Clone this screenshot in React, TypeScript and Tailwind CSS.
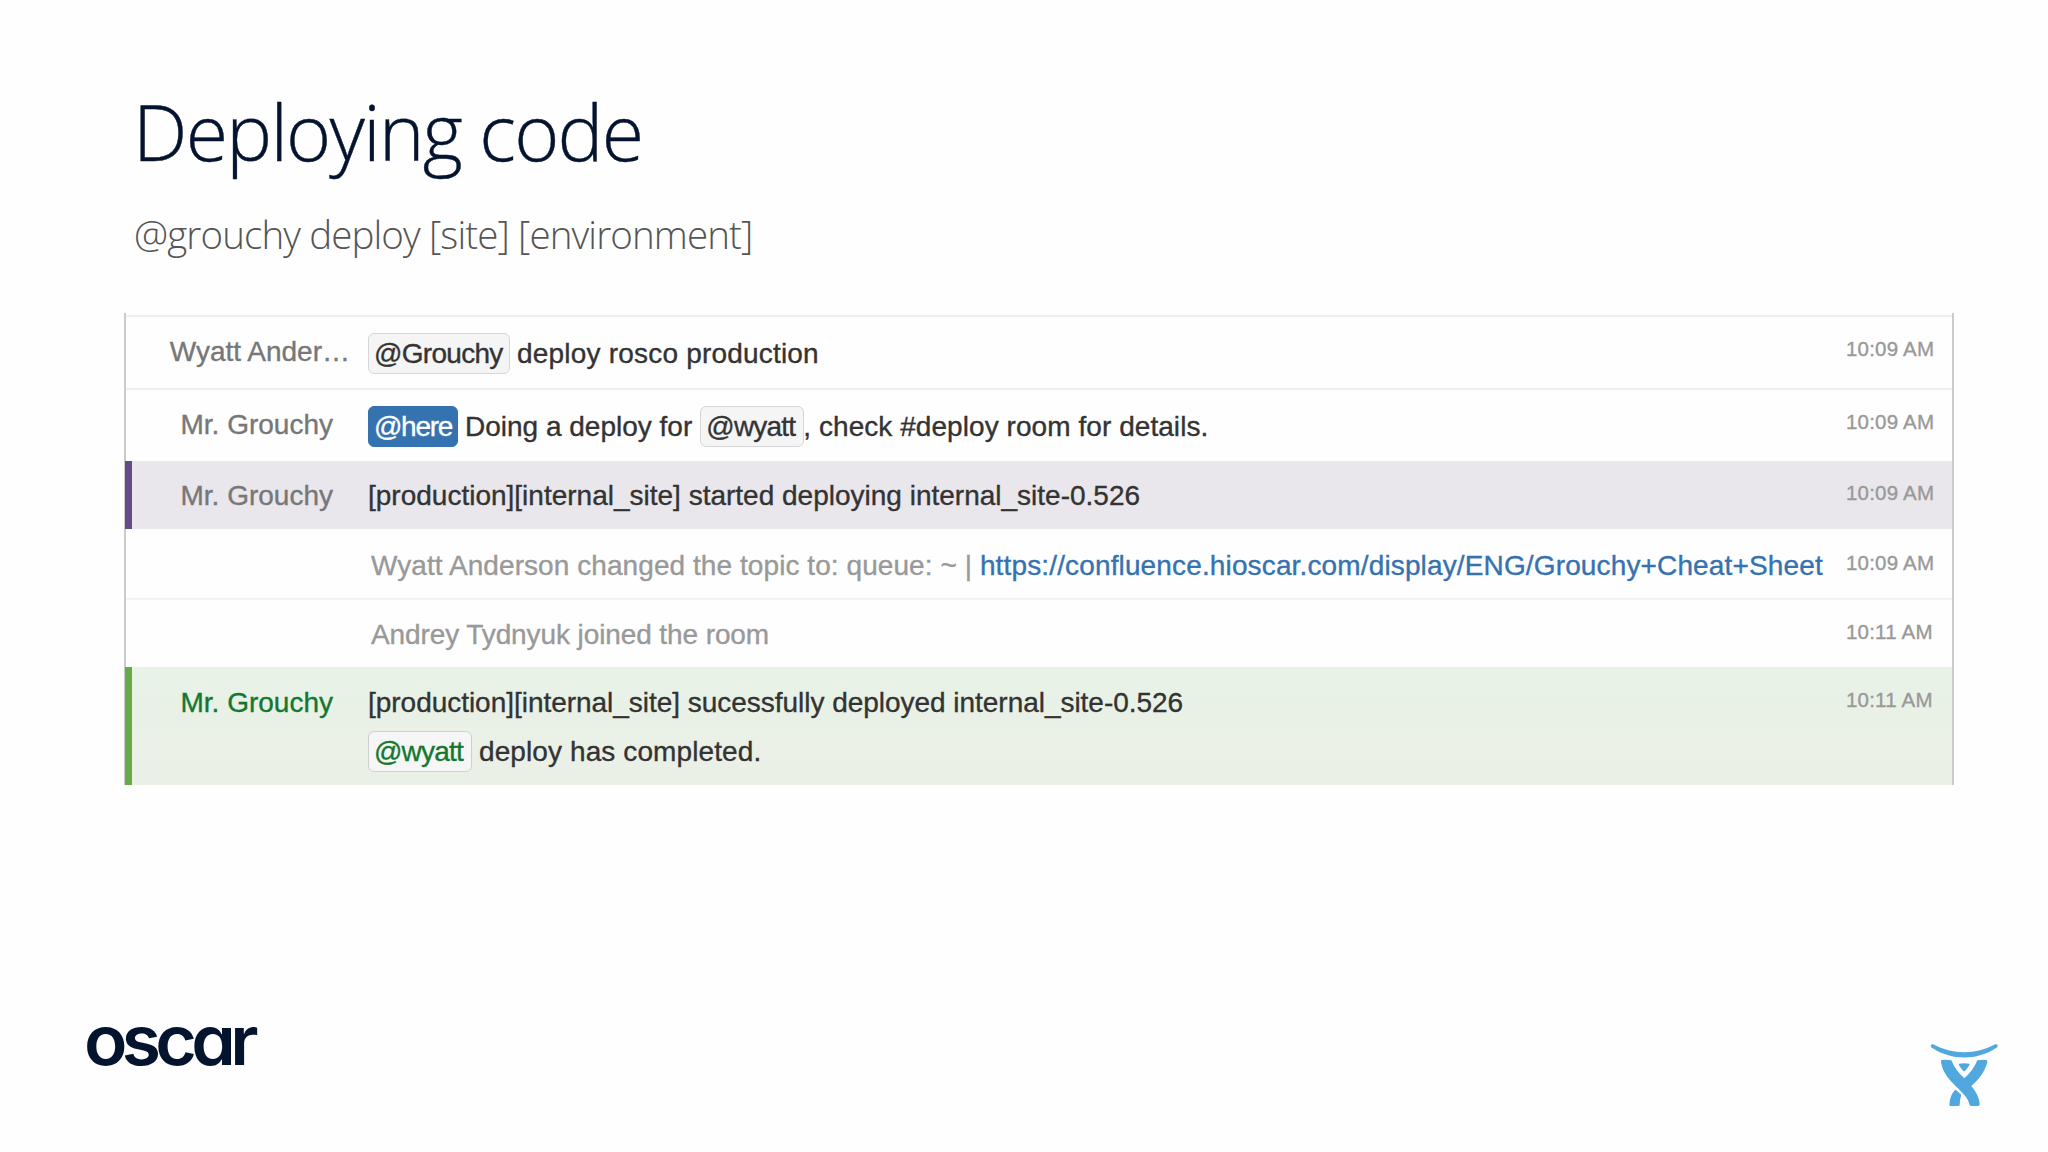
import type { ReactNode } from 'react';
import clsx from 'clsx';

type RowProps = {
  name?: string;
  time: string;
  className: string;
  barClass?: string;
  nameClass?: string;
  bodyClass?: string;
  children: ReactNode;
};

// One line of the chat log: coloured edge, sender, message, time
function Row({
  name,
  time,
  className,
  barClass = '-my-0.5 border-l-2 border-[#cbcbcb]',
  nameClass = 'pr-[17px] text-[#777777]',
  bodyClass = 'pt-[17px]',
  children,
}: RowProps) {
  return (
    <div className={clsx('flex', className)}>
      <div className={clsx('w-2 shrink-0', barClass)} />
      <div className={clsx('w-[218px] shrink-0 pt-[17px] text-right', nameClass)}>{name}</div>
      <div className={clsx('ml-[18px] flex-1', bodyClass)}>{children}</div>
      <div className="w-[106px] pt-5 text-[20.5px] leading-6 tracking-[0.2px] text-[#999999]">{time}</div>
    </div>
  );
}

function Mention({ className, children }: { className: string; children: ReactNode }) {
  return (
    <span className={clsx('h-[41px] shrink-0 rounded-md border pl-[5px] leading-[39px]', className)}>
      {children}
    </span>
  );
}

function AtlassianLogo() {
  return (
    <svg className="mt-9 mr-[43px] h-20 w-20" viewBox="0 0 240 240" fill="#51a8df">
      <path d="M24 28 C84 60 152 60 211 28 Q219 26 218 34 Q217 37 213 39 C156 77 80 77 22 39 Q17 37 17 32 Q18 26 24 28Z" />
      <path d="M50 75 Q64 73 79 76 Q91 106 118 130 Q145 106 157 76 Q172 73 184 75 Q188 76 187 81 C179 112 161 134 139 153 C154 172 163 188 164 208 Q164 213 159 213 L138 213 Q134 213 133 208 C130 189 116 177 94 155 C70 132 53 112 48 81 Q47 76 50 75Z" />
      <path d="M103 86 Q118 83 132 86 Q135 87 133 91 Q127 101 120 108 Q118 110 115 108 Q108 101 102 91 Q101 87 103 86Z" />
      <path d="M93 165 L107 178 Q109 180 108 183 Q105 192 104 209 Q104 213 100 213 L77 213 Q73 213 73 209 Q74 182 90 165 Q91 163 93 165Z" />
    </svg>
  );
}

export default function App() {
  return (
    <div className="flex h-[1152px] w-[2048px] flex-col overflow-hidden bg-[#fefefe]">
      <header className="pt-20 pl-[133px] font-['Open_Sans',sans-serif] font-light">
        <h1 className="text-[77px] leading-[104px] tracking-[-1.7px] text-[#04142f] [-webkit-text-stroke:0.4px]">
          Deploying code
        </h1>
        <p className="mt-6 pl-px text-[38.5px] leading-[52px] tracking-[-0.88px] text-[#555555]">
          @grouchy deploy [site] [environment]
        </p>
      </header>

      {/* Chat log */}
      <main className="mt-[53px] ml-[124px] w-[1830px] border-r-2 border-[#cbcbcb] font-['Liberation_Sans',Arial,sans-serif] text-[28px] leading-9 whitespace-pre text-[#333333] [-webkit-text-stroke:0.35px]">
        <div className="h-0.5 border-l-2 border-[#cbcbcb]" />
        <Row
          name="Wyatt Ander…"
          time="10:09 AM"
          className="h-[73px] border-t-2 border-[#f0eef2]"
          nameClass="text-[#777777]"
          bodyClass="flex items-baseline pt-4"
        >
          <Mention className="w-[142px] border-[#d6d6d9] bg-[#f5f5f6] tracking-[-0.7px]">@Grouchy</Mention>
          <span className="ml-[7px] tracking-[0.2px]">deploy rosco production</span>
        </Row>
        <Row
          name="Mr. Grouchy"
          time="10:09 AM"
          className="h-[73px] border-t-2 border-[#f0eef2]"
          bodyClass="flex items-baseline pt-4"
        >
          <Mention className="w-[90px] border-[#3572b0] bg-[#3572b0] tracking-[-1.3px] text-white">@here</Mention>
          <span className="ml-[7px]">Doing a deploy for</span>
          <Mention className="ml-2 w-[104px] border-[#d6d6d9] bg-[#f5f5f6] tracking-[-0.8px]">@wyatt</Mention>
          <span className="-ml-px tracking-[0.06px]">, check #deploy room for details.</span>
        </Row>
        <Row
          name="Mr. Grouchy"
          time="10:09 AM"
          className="h-[68px] bg-[#e9e6ec]"
          barClass="border-l border-[#cbcbcb] bg-[#664a86]"
        >
          <p>[production][internal_site] started deploying internal_site-0.526</p>
        </Row>
        <Row time="10:09 AM" className="h-[69px] border-t-2 border-transparent">
          <p className="pl-[3px] text-[#999999]">
            <span className="tracking-[0.07px]">Wyatt Anderson changed the topic to: queue: ~ | </span>
            <a className="tracking-[0.14px] text-[#3572b0]">
              https://confluence.hioscar.com/display/ENG/Grouchy+Cheat+Sheet
            </a>
          </p>
        </Row>
        <Row time="10:11 AM" className="h-[69px] border-t-2 border-[#f3f3f4]">
          <p className="pl-[3px] tracking-[-0.1px] text-[#999999]">Andrey Tydnyuk joined the room</p>
        </Row>
        <Row
          name="Mr. Grouchy"
          time="10:11 AM"
          className="h-[118px] border-t border-[#eaf3e8] bg-linear-to-b from-[#e8f2e6] to-[#ebf0e7]"
          barClass="-mt-px border-l border-[#cbcbcb] bg-[#67ab49]"
          nameClass="pr-[17px] text-[#14772f]"
        >
          <p className="tracking-[-0.03px]">
            [production][internal_site] sucessfully deployed internal_site-0.526
          </p>
          <div className="mt-2.5 flex items-baseline">
            <Mention className="w-[104px] border-[#d0d0d2] bg-[#f6f6f7] tracking-[-0.8px] text-[#14772f]">@wyatt</Mention>
            <span className="ml-[7px] tracking-[0.1px]">deploy has completed.</span>
          </div>
        </Row>
      </main>

      <footer className="mt-[214px] flex items-start justify-between">
        <div className="ml-[84px] origin-left scale-x-105 font-['Inter',sans-serif] text-[68px] leading-[82px] font-semibold tracking-[-5.4px] text-[#04142f] [font-feature-settings:'cv11']">
          oscar
        </div>
        <AtlassianLogo />
      </footer>
    </div>
  );
}
